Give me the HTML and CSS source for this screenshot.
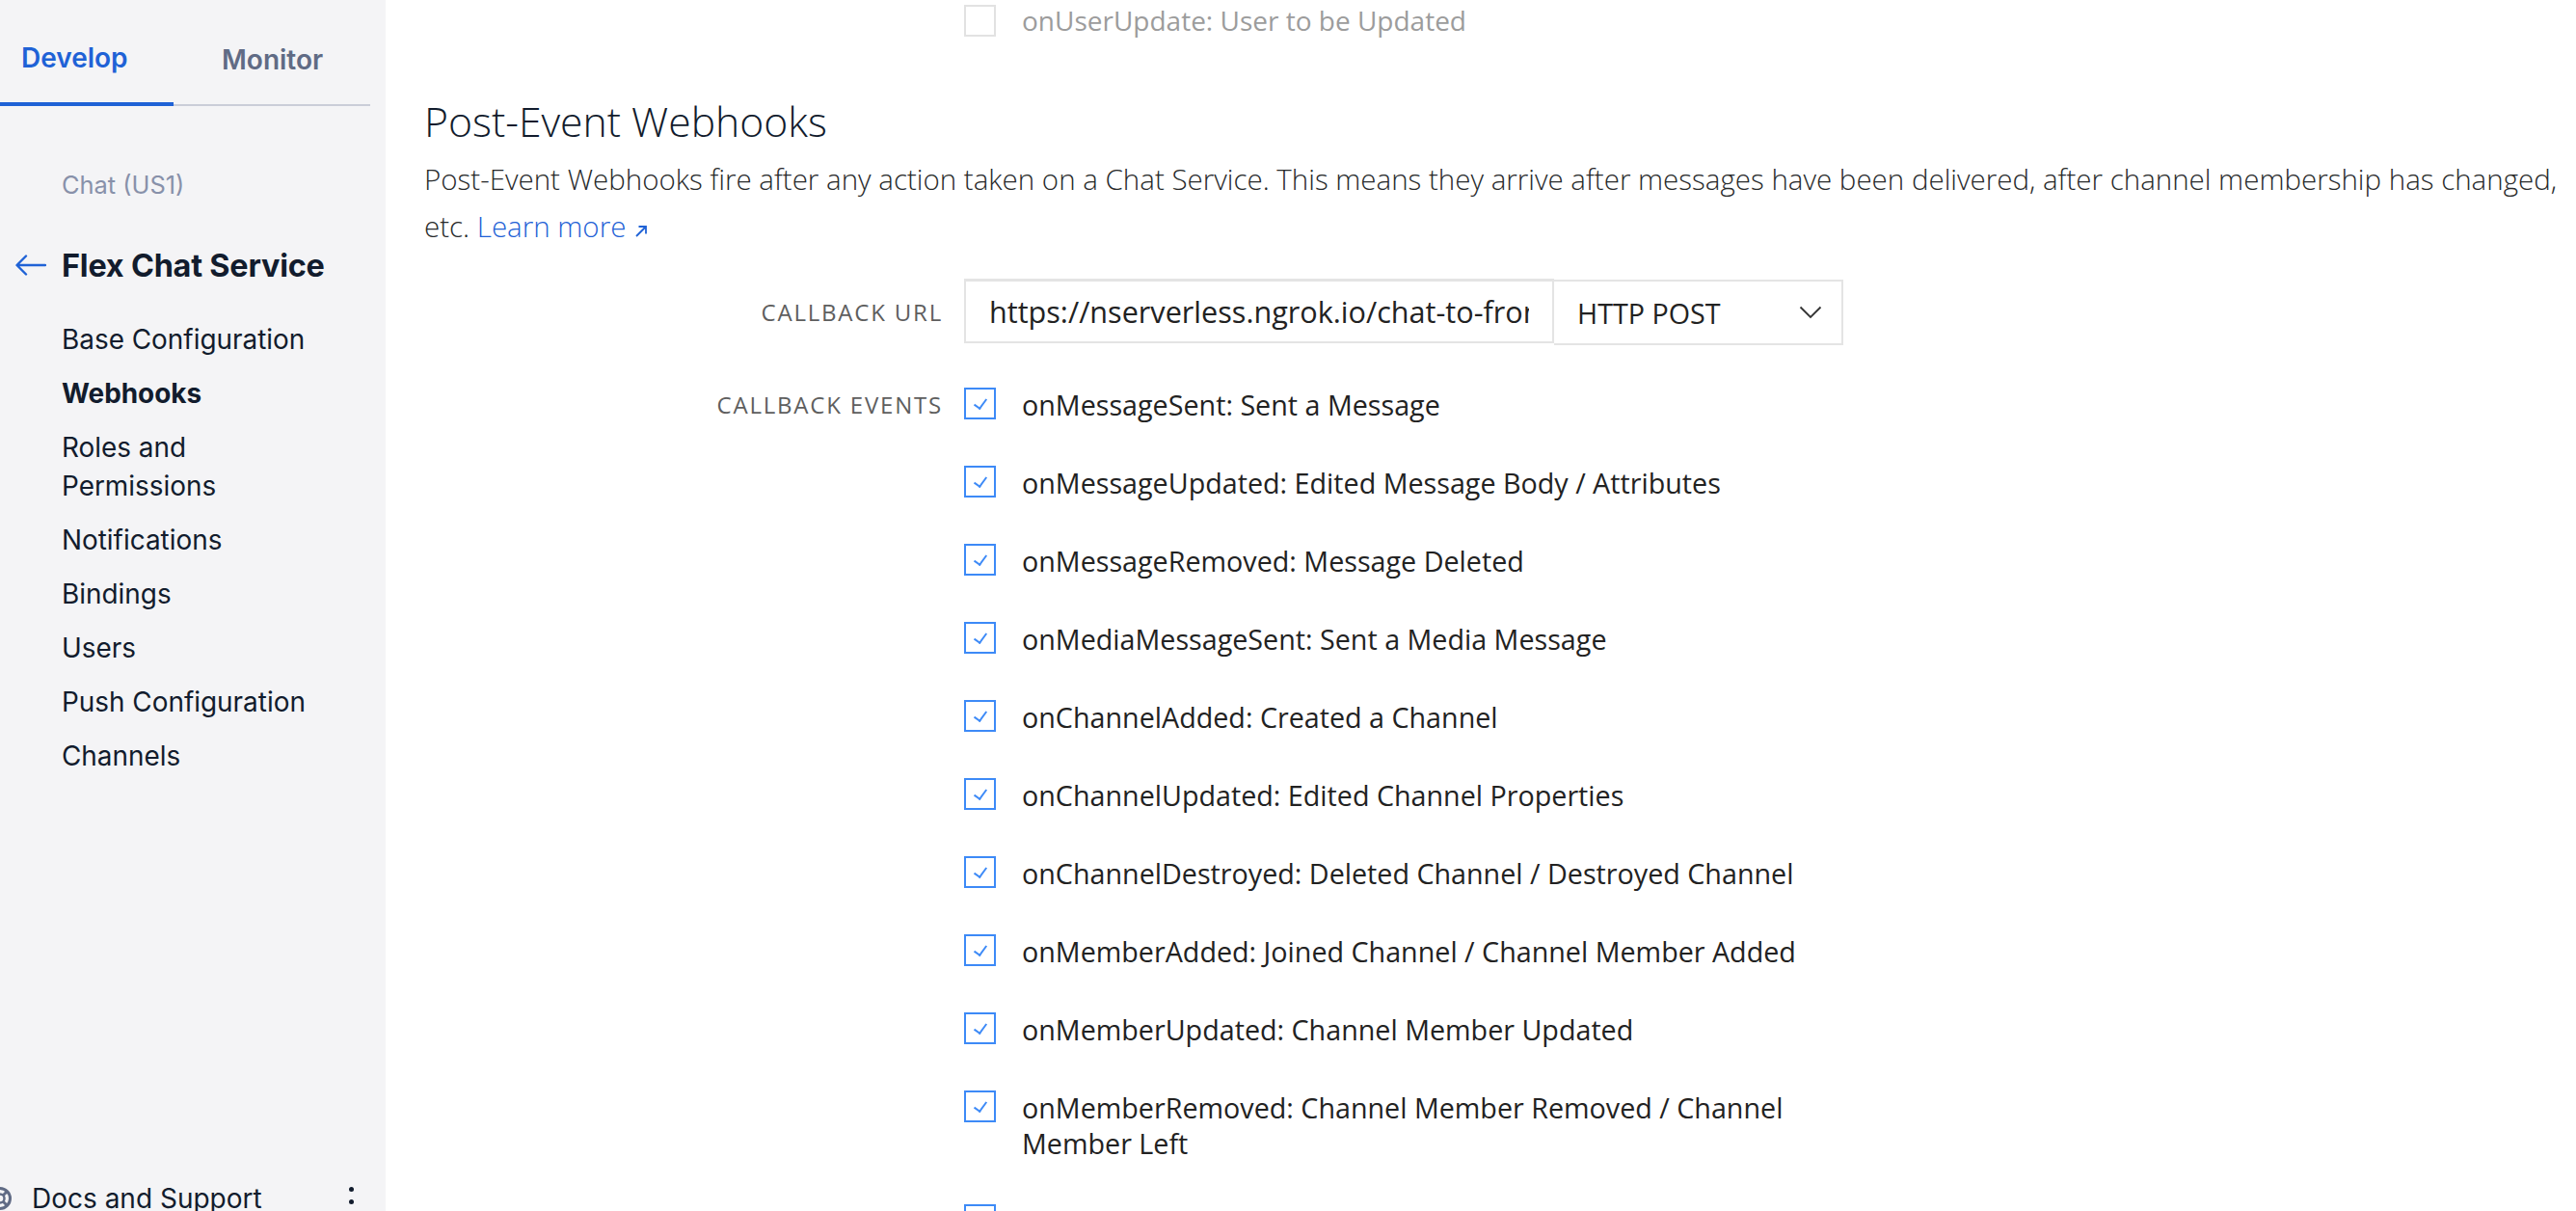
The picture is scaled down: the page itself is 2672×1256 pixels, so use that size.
FILE: index.html
```html
<!DOCTYPE html>
<html lang="en">
<head>
<meta charset="utf-8">
<title>Webhooks - Flex Chat Service</title>
<link rel="stylesheet" href="styles.css">
</head>
<body>
<div class="app">
  <aside class="sidebar">
    <nav class="tabs">
      <a class="tab tab-active">Develop</a>
      <a class="tab tab-monitor">Monitor</a>
    </nav>
    <div class="crumb">Chat (US1)</div>
    <div class="back">
      <svg class="back-arrow" width="32" height="22" viewBox="0 0 32 22"><path d="M31 11H2M11 1.5L1.5 11L11 20.5" fill="none" stroke="#1f62d6" stroke-width="2.4" stroke-linecap="round" stroke-linejoin="round"/></svg>
      <span class="back-title">Flex Chat Service</span>
    </div>
    <ul class="nav">
      <li>Base Configuration</li>
      <li class="nav-active">Webhooks</li>
      <li>Roles and<br>Permissions</li>
      <li>Notifications</li>
      <li>Bindings</li>
      <li>Users</li>
      <li>Push Configuration</li>
      <li>Channels</li>
    </ul>
    <div class="docs">
      <svg class="docs-icon" width="26" height="26" viewBox="0 0 26 26"><circle cx="13" cy="13" r="10.5" fill="none" stroke="#606b85" stroke-width="3"/><circle cx="13" cy="13" r="4.5" fill="none" stroke="#606b85" stroke-width="2.5"/><path d="M6 6l4 4M20 6l-4 4M6 20l4-4M20 20l-4-4" stroke="#606b85" stroke-width="3"/></svg>
      <span class="docs-text">Docs and Support</span>
      <span class="kebab"><i></i><i></i><i></i></span>
    </div>
  </aside>
  <main class="main">
    <div class="event event-disabled">
      <span class="box box-off"></span>
      <span class="event-label">onUserUpdate: User to be Updated</span>
    </div>
    <h2 class="section-title">Post-Event Webhooks</h2>
    <p class="section-desc">Post-Event Webhooks fire after any action taken on a Chat Service. This means they arrive after messages have been delivered, after channel membership has changed, etc. <a class="learn">Learn more</a><svg class="ext" width="14" height="14" viewBox="0 0 14 14"><path d="M2 12L12 2M4.5 2H12V9.5" fill="none" stroke="#1f62d6" stroke-width="1.8"/></svg></p>
    <div class="form-row url-row">
      <label class="form-label">Callback URL</label>
      <div class="url-group">
        <div class="url-input"><span class="url-text">https://nserverless.ngrok.io/chat-to-front</span></div>
        <div class="method-select">
          <span>HTTP POST</span>
          <svg width="24" height="14" viewBox="0 0 24 14"><path d="M1.5 1.5L12 12L22.5 1.5" fill="none" stroke="#333" stroke-width="1.8"/></svg>
        </div>
      </div>
    </div>
    <div class="form-row events-row">
      <label class="form-label events-label">Callback Events</label>
      <div class="events">
        <div class="event"><span class="box"></span><span class="event-label">onMessageSent: Sent a Message</span></div>
        <div class="event"><span class="box"></span><span class="event-label">onMessageUpdated: Edited Message Body / Attributes</span></div>
        <div class="event"><span class="box"></span><span class="event-label">onMessageRemoved: Message Deleted</span></div>
        <div class="event"><span class="box"></span><span class="event-label">onMediaMessageSent: Sent a Media Message</span></div>
        <div class="event"><span class="box"></span><span class="event-label">onChannelAdded: Created a Channel</span></div>
        <div class="event"><span class="box"></span><span class="event-label">onChannelUpdated: Edited Channel Properties</span></div>
        <div class="event"><span class="box"></span><span class="event-label">onChannelDestroyed: Deleted Channel / Destroyed Channel</span></div>
        <div class="event"><span class="box"></span><span class="event-label">onMemberAdded: Joined Channel / Channel Member Added</span></div>
        <div class="event"><span class="box"></span><span class="event-label">onMemberUpdated: Channel Member Updated</span></div>
        <div class="event"><span class="box"></span><span class="event-label">onMemberRemoved: Channel Member Removed / Channel Member Left</span></div>
        <div class="event"><span class="box"></span><span class="event-label">onUserAdded: User Added</span></div>
      </div>
    </div>
  </main>
</div>
</body>
</html>
```

FILE: styles.css
```css
* { box-sizing: border-box; }
html, body { margin: 0; padding: 0; }
body {
  width: 2672px;
  height: 1256px;
  overflow: hidden;
  background: #ffffff;
  font-family: "Open Sans", "Liberation Sans", sans-serif;
}
.app {
  display: flex;
  height: 1256px;
  overflow: hidden;
}

/* Sidebar */
.sidebar {
  flex: 0 0 400px;
  width: 400px;
  height: 1256px;
  background: #f4f4f6;
  padding-right: 16px;
  display: flex;
  flex-direction: column;
  font-family: Inter, "Liberation Sans", sans-serif;
  color: #121c2d;
  overflow: hidden;
}
.tabs {
  display: flex;
  flex: 0 0 110px;
  height: 110px;
  border-bottom: 2px solid #cacdd8;
}
.tab {
  display: flex;
  align-items: center;
  font-size: 28px;
  font-weight: 600;
  color: #606b85;
  padding-top: 14px;
  height: 110px;
}
.tab-active {
  width: 180px;
  padding-left: 22px;
  color: #1f62d6;
  border-bottom: 4px solid #1f62d6;
  margin-bottom: -2px;
}
.tab-monitor {
  padding-left: 50px;
}
.crumb {
  margin-top: 66px;
  padding-left: 64px;
  font-size: 25.4px;
  color: #8891aa;
  line-height: 32px;
}
.back {
  display: flex;
  align-items: center;
  margin-top: 49px;
  height: 36px;
}
.back-arrow {
  margin-left: 16px;
  margin-right: 16px;
}
.back-title {
  font-size: 32.4px;
  font-weight: 700;
  letter-spacing: -0.2px;
}
.nav {
  list-style: none;
  margin: 31px 0 0 0;
  padding: 0 0 0 64px;
  font-size: 27.9px;
}
.nav li {
  padding: 8px 0;
  line-height: 40px;
}
.nav .nav-active {
  font-weight: 700;
}
.docs {
  margin-top: auto;
  display: flex;
  align-items: center;
  height: 30px;
  margin-bottom: 0;
  transform: translateY(2px);
}
.docs-icon {
  margin-left: -13px;
  margin-right: 20px;
}
.docs-text {
  font-size: 28px;
  color: #121c2d;
}
.kebab {
  margin-left: auto;
  margin-right: 17px;
  display: flex;
  flex-direction: column;
  gap: 8px;
  margin-top: 6px;
}
.kebab i {
  display: block;
  width: 5px;
  height: 5px;
  border-radius: 50%;
  background: #121c2d;
}

/* Main */
.main {
  flex: 1;
  padding-left: 40px;
  padding-top: 3px;
  color: #222;
}
.event {
  display: flex;
  align-items: flex-start;
  padding-bottom: 44px;
}
.box {
  flex: 0 0 33px;
  width: 33px;
  height: 33px;
  margin-top: 1px;
  margin-right: 27px;
  border: 2px solid #3d8af7;
  position: relative;
}
.box::after {
  content: "";
  position: absolute;
  left: 11px;
  top: 7px;
  width: 6px;
  height: 11px;
  border-right: 2px solid #3d8af7;
  border-bottom: 2px solid #3d8af7;
  transform: rotate(36deg);
}
.box-off {
  border-color: #e2e2e2;
}
.box-off::after { display: none; }
.event-label {
  font-size: 28.7px;
  line-height: 37px;
  color: #222;
}
.event-disabled {
  margin-left: 560px;
  padding-bottom: 0;
}
.event-disabled .box { margin-top: 2px; }
.event-disabled .event-label {
  color: #9c9c9c;
  font-size: 28px;
}
.section-title {
  margin: 58px 0 0 0;
  font-size: 42.7px;
  font-weight: 300;
  line-height: 56px;
  color: #121c2d;
}
.section-desc {
  margin: 7px 0 0 0;
  font-size: 29.5px;
  line-height: 49px;
  font-weight: 300;
  color: #282a2b;
}
.learn {
  color: #1f62d6;
}
.ext {
  margin-left: 9px;
  vertical-align: -1px;
}
.form-row {
  display: flex;
}
.form-label {
  flex: 0 0 538px;
  margin-right: 22px;
  text-align: right;
  text-transform: uppercase;
  font-size: 24px;
  letter-spacing: 1.8px;
  color: #5e5e5e;
}
.url-row {
  margin-top: 30px;
  align-items: center;
}
.url-group {
  display: flex;
  width: 912px;
}
.url-input {
  width: 612px;
  height: 67px;
  border: 2px solid #e4e4e4;
  border-top-width: 3px;
  padding: 0 24px;
  display: flex;
  align-items: center;
}
.url-text {
  display: block;
  width: 100%;
  overflow: hidden;
  white-space: nowrap;
  font-size: 30.6px;
  line-height: 40px;
  color: #222;
}
.method-select {
  width: 300px;
  height: 68px;
  margin-top: 1px;
  border: 2px solid #e4e4e4;
  border-left: none;
  display: flex;
  align-items: center;
  justify-content: space-between;
  padding: 0 20px 0 24px;
  font-size: 28.7px;
  color: #222;
}
.events-row {
  margin-top: 43px;
}
.events-label {
  line-height: 37px;
}
.events {
  width: 912px;
}
```
